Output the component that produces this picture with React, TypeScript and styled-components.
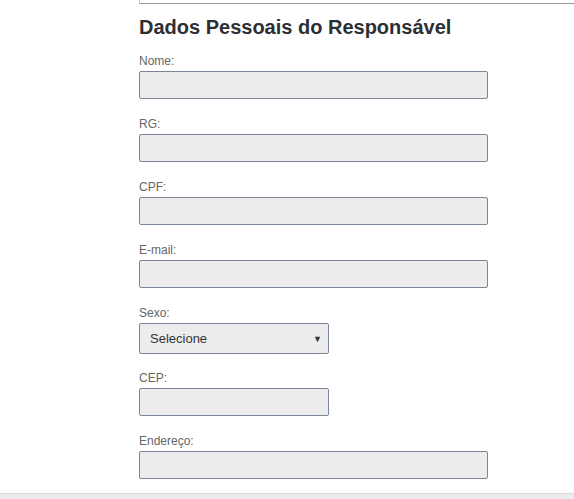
import React from "react";
import styled, { createGlobalStyle } from "styled-components";

const Global = createGlobalStyle`
  html, body { margin: 0; padding: 0; background: #fff; overflow: hidden; }
  body { font-family: "Liberation Sans", Arial, sans-serif; }
`;

const Page = styled.div`
  padding-left: 139px;
  height: 499px;
  overflow: hidden;
  position: relative;
`;

const TopBox = styled.div`
  height: 3px;
  border-left: 1px solid #c8c8c8;
  border-bottom: 1px solid #9a9a9a;
`;

const Title = styled.h2`
  margin: 11px 0 0 0;
  font-size: 20px;
  line-height: 24px;
  font-weight: bold;
  color: #2c2f33;
`;

const Form = styled.div`
  display: flex;
  flex-direction: column;
  margin-top: 15px;
`;

const Field = styled.div<{ $gap?: number }>`
  display: flex;
  flex-direction: column;
  margin-bottom: ${(p) => p.$gap ?? 26}px;
`;

const Label = styled.label`
  font-size: 12px;
  line-height: 14px;
  color: #666;
  margin-bottom: 3px;
`;

const Input = styled.div<{ $w: number }>`
  box-sizing: border-box;
  width: ${(p) => p.$w}px;
  height: 28px;
  background: #ededee;
  border: 1px solid #7a8597;
  border-radius: 2px;
`;

const Select = styled.div`
  box-sizing: border-box;
  width: 190px;
  height: 31px;
  background: #ededee;
  border: 1px solid #7a8597;
  border-radius: 2px;
  display: flex;
  align-items: center;
  justify-content: space-between;
  padding: 0 6px 0 10px;
  font-size: 13px;
  color: #333;
`;

const Caret = styled.span`
  font-size: 9px;
  color: #333;
`;

const BottomBar = styled.div`
  position: absolute;
  left: 0;
  right: 0;
  bottom: 0;
  height: 5px;
  background: #ebebeb;
  border-top: 1px solid #dcdcdc;
`;

const fields = [
  { label: "Nome:", w: 349 },
  { label: "RG:", w: 349 },
  { label: "CPF:", w: 349 },
  { label: "E-mail:", w: 349 },
];

export default function App() {
  return (
    <>
      <Global />
      <Page>
        <TopBox />
        <Title>Dados Pessoais do Responsável</Title>
        <Form>
          {fields.map((f) => (
            <Field key={f.label} $gap={18}>
              <Label>{f.label}</Label>
              <Input $w={f.w} />
            </Field>
          ))}
          <Field $gap={17}>
            <Label>Sexo:</Label>
            <Select>
              <span>Selecione</span>
              <Caret>▼</Caret>
            </Select>
          </Field>
          <Field $gap={18}>
            <Label>CEP:</Label>
            <Input $w={190} />
          </Field>
          <Field $gap={18}>
            <Label>Endereço:</Label>
            <Input $w={349} />
          </Field>
        </Form>
        <BottomBar />
      </Page>
    </>
  );
}
